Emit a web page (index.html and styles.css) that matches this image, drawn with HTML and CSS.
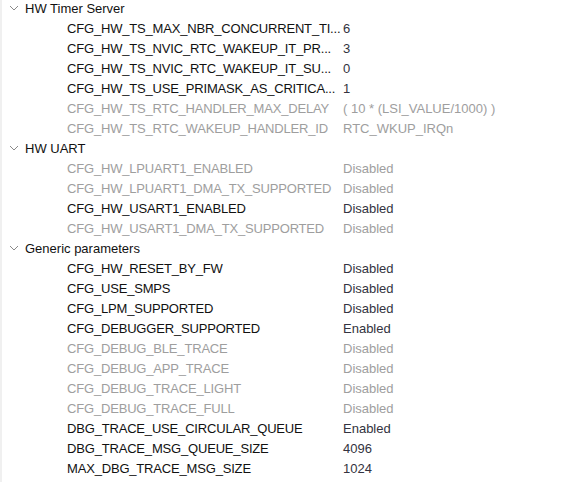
FILE: index.html
```html
<!DOCTYPE html>
<html>
<head>
<meta charset="utf-8">
<link rel="stylesheet" href="styles.css">
</head>
<body>
<div class="tree">
  <div class="group">
    <div class="row head"><svg class="chev" width="10" height="6" viewBox="0 0 10 6"><path d="M1 1 L5 5 L9 1" fill="none" stroke="#8a8a8a" stroke-width="1"/></svg><span>HW Timer Server</span></div>
    <div class="row"><span class="name">CFG_HW_TS_MAX_NBR_CONCURRENT_TI...</span><span class="val">6</span></div>
    <div class="row"><span class="name">CFG_HW_TS_NVIC_RTC_WAKEUP_IT_PR...</span><span class="val">3</span></div>
    <div class="row"><span class="name">CFG_HW_TS_NVIC_RTC_WAKEUP_IT_SU...</span><span class="val">0</span></div>
    <div class="row"><span class="name">CFG_HW_TS_USE_PRIMASK_AS_CRITICA...</span><span class="val">1</span></div>
    <div class="row off"><span class="name">CFG_HW_TS_RTC_HANDLER_MAX_DELAY</span><span class="val">( 10 * (LSI_VALUE/1000) )</span></div>
    <div class="row off"><span class="name">CFG_HW_TS_RTC_WAKEUP_HANDLER_ID</span><span class="val">RTC_WKUP_IRQn</span></div>
  </div>
  <div class="group">
    <div class="row head"><svg class="chev" width="10" height="6" viewBox="0 0 10 6"><path d="M1 1 L5 5 L9 1" fill="none" stroke="#8a8a8a" stroke-width="1"/></svg><span>HW UART</span></div>
    <div class="row off"><span class="name">CFG_HW_LPUART1_ENABLED</span><span class="val">Disabled</span></div>
    <div class="row off"><span class="name">CFG_HW_LPUART1_DMA_TX_SUPPORTED</span><span class="val">Disabled</span></div>
    <div class="row"><span class="name">CFG_HW_USART1_ENABLED</span><span class="val">Disabled</span></div>
    <div class="row off"><span class="name">CFG_HW_USART1_DMA_TX_SUPPORTED</span><span class="val">Disabled</span></div>
  </div>
  <div class="group">
    <div class="row head"><svg class="chev" width="10" height="6" viewBox="0 0 10 6"><path d="M1 1 L5 5 L9 1" fill="none" stroke="#8a8a8a" stroke-width="1"/></svg><span>Generic parameters</span></div>
    <div class="row"><span class="name">CFG_HW_RESET_BY_FW</span><span class="val">Disabled</span></div>
    <div class="row"><span class="name">CFG_USE_SMPS</span><span class="val">Disabled</span></div>
    <div class="row"><span class="name">CFG_LPM_SUPPORTED</span><span class="val">Disabled</span></div>
    <div class="row"><span class="name">CFG_DEBUGGER_SUPPORTED</span><span class="val">Enabled</span></div>
    <div class="row off"><span class="name">CFG_DEBUG_BLE_TRACE</span><span class="val">Disabled</span></div>
    <div class="row off"><span class="name">CFG_DEBUG_APP_TRACE</span><span class="val">Disabled</span></div>
    <div class="row off"><span class="name">CFG_DEBUG_TRACE_LIGHT</span><span class="val">Disabled</span></div>
    <div class="row off"><span class="name">CFG_DEBUG_TRACE_FULL</span><span class="val">Disabled</span></div>
    <div class="row"><span class="name">DBG_TRACE_USE_CIRCULAR_QUEUE</span><span class="val">Enabled</span></div>
    <div class="row"><span class="name">DBG_TRACE_MSG_QUEUE_SIZE</span><span class="val">4096</span></div>
    <div class="row"><span class="name">MAX_DBG_TRACE_MSG_SIZE</span><span class="val">1024</span></div>
  </div>
</div>
</body>
</html>
```
FILE: styles.css
```css
html, body {
  margin: 0;
  padding: 0;
  background: #ffffff;
}
body {
  font-family: "Liberation Sans", Arial, sans-serif;
  font-size: 13px;
  color: #111111;
  height: 482px;
  overflow: hidden;
  border-left: 2px solid #f0f0f0;
}
.tree {
  margin-top: -2px;
}
.row {
  display: flex;
  align-items: center;
  height: 20px;
  white-space: nowrap;
}
.head {
  padding-left: 7px;
}
.chev {
  display: block;
  margin-right: 6px;
}
.row .name {
  margin-left: 65px;
  width: 276px;
  letter-spacing: -0.18px;
  flex-shrink: 0;
}
.row .val {
  color: #333340;
}
.off .name,
.off .val {
  color: #9e9e9e;
}
```
